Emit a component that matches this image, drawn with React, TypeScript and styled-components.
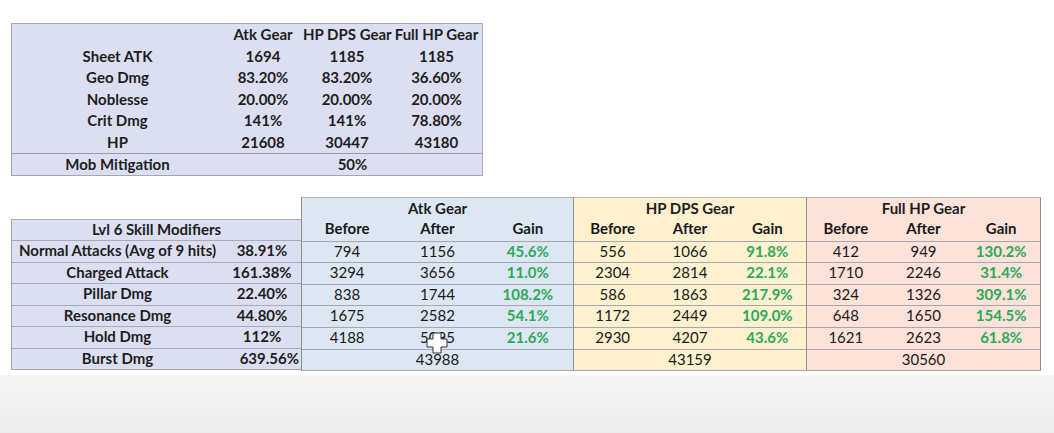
import React from "react";
import styled, { createGlobalStyle } from "styled-components";

const Global = createGlobalStyle`
  html, body { margin: 0; padding: 0; background: #ffffff; }
  body { font-family: Lato, "Liberation Sans", sans-serif; color: #1e1e1e; }
`;

const Page = styled.div`
  position: relative;
  width: 1054px;
  height: 433px;
  overflow: hidden;
  display: flex;
  flex-direction: column;
  background: #ffffff;
`;

const Sheet = styled.div`
  padding: 23px 0 0 11px;
  display: flex;
  flex-direction: column;
  gap: 21px;
`;

const Footer = styled.div`
  flex: 1;
  margin-top: 4px;
  background: linear-gradient(180deg, #f6f6f6 0%, #ebebeb 100%);
`;

const TopTable = styled.div`
  width: 472px;
  box-sizing: border-box;
  display: grid;
  grid-template-columns: 211px 80px 88px 91px;
  grid-auto-rows: 21.5px;
  background: #dcdff1;
  border: 1px solid #a4a6b4;
  font-size: 15px;
  font-weight: 700;
`;

const TCell = styled.div<{ $span?: number; $sep?: boolean }>`
  grid-column: span ${(p) => p.$span ?? 1};
  text-align: center;
  line-height: 21px;
  white-space: nowrap;
  border-top: ${(p) => (p.$sep ? "1px solid #9a9cab" : "none")};
  box-sizing: border-box;
`;

const Bottom = styled.div`
  display: flex;
  align-items: flex-start;
`;

const LabelBlock = styled.div`
  margin-top: 22px;
  width: 290px;
  box-sizing: border-box;
  background: #dcdff1;
  border-left: 1px solid #a4a6b4;
  border-bottom: 1px solid #a4a6b4;
  font-size: 15px;
  font-weight: 700;
`;

const LRow = styled.div`
  display: grid;
  grid-template-columns: 211px 78px;
  height: 21.57px;
  line-height: 19px;
  border-top: 1px solid #a8aab8;
  box-sizing: border-box;
`;

const LTitle = styled.div`
  height: 21.57px;
  line-height: 19px;
  text-align: center;
  border-top: 1px solid #a8aab8;
  box-sizing: border-box;
`;

const LText = styled.div<{ $right?: boolean }>`
  text-align: ${(p) => (p.$right ? "right" : "center")};
  white-space: nowrap;
  padding-right: ${(p) => (p.$right ? "2px" : "0")};
`;

const Section = styled.div<{ $bg: string; $w: number; $first?: boolean }>`
  width: ${(p) => p.$w}px;
  box-sizing: border-box;
  background: ${(p) => p.$bg};
  border-top: 1px solid #b3b3b3;
  border-bottom: 1px solid #a8a8a8;
  border-right: 1px solid #8f8f8f;
  border-left: ${(p) => (p.$first ? "1px solid #8f8f8f" : "none")};
  font-size: 15px;
`;

const SRow = styled.div<{ $lined?: boolean }>`
  display: grid;
  grid-template-columns: repeat(3, 1fr);
  height: 21.6px;
  line-height: 19px;
  box-sizing: border-box;
  border-top: ${(p) => (p.$lined ? "1px solid #a6a8ad" : "none")};
`;

const STitle = styled.div`
  height: 21.6px;
  line-height: 20px;
  text-align: center;
  font-weight: 700;
`;

const SCell = styled.div<{ $kind?: "head" | "gain" | "num" }>`
  text-align: center;
  white-space: nowrap;
  font-weight: ${(p) => (p.$kind === "num" || !p.$kind ? 400 : 700)};
  color: ${(p) => (p.$kind === "gain" ? "#2ea85a" : "#1a1a1a")};
`;

const Cursor = styled.svg`
  position: absolute;
  left: 425px;
  top: 331px;
  width: 24px;
  height: 24px;
`;

const topRows: [string, string, string, string][] = [
  ["Sheet ATK", "1694", "1185", "1185"],
  ["Geo Dmg", "83.20%", "83.20%", "36.60%"],
  ["Noblesse", "20.00%", "20.00%", "20.00%"],
  ["Crit Dmg", "141%", "141%", "78.80%"],
  ["HP", "21608", "30447", "43180"],
];

const labels: [string, string][] = [
  ["Normal Attacks (Avg of 9 hits)", "38.91%"],
  ["Charged Attack", "161.38%"],
  ["Pillar Dmg", "22.40%"],
  ["Resonance Dmg", "44.80%"],
  ["Hold Dmg", "112%"],
];

type Sec = {
  title: string;
  bg: string;
  w: number;
  rows: [string, string, string][];
  burst: string;
};

const sections: Sec[] = [
  {
    title: "Atk Gear",
    bg: "#dce7f3",
    w: 273,
    rows: [
      ["794", "1156", "45.6%"],
      ["3294", "3656", "11.0%"],
      ["838", "1744", "108.2%"],
      ["1675", "2582", "54.1%"],
      ["4188", "5095", "21.6%"],
    ],
    burst: "43988",
  },
  {
    title: "HP DPS Gear",
    bg: "#fdf1d0",
    w: 233,
    rows: [
      ["556", "1066", "91.8%"],
      ["2304", "2814", "22.1%"],
      ["586", "1863", "217.9%"],
      ["1172", "2449", "109.0%"],
      ["2930", "4207", "43.6%"],
    ],
    burst: "43159",
  },
  {
    title: "Full HP Gear",
    bg: "#fce2d8",
    w: 234,
    rows: [
      ["412", "949", "130.2%"],
      ["1710", "2246", "31.4%"],
      ["324", "1326", "309.1%"],
      ["648", "1650", "154.5%"],
      ["1621", "2623", "61.8%"],
    ],
    burst: "30560",
  },
];

export default function App() {
  return (
    <Page>
      <Global />
      <Sheet>
        <TopTable>
          <TCell />
          <TCell>Atk Gear</TCell>
          <TCell>HP DPS Gear</TCell>
          <TCell>Full HP Gear</TCell>
          {topRows.map((r) => (
            <React.Fragment key={r[0]}>
              {r.map((c, i) => (
                <TCell key={i}>{c}</TCell>
              ))}
            </React.Fragment>
          ))}
          <TCell $sep>Mob Mitigation</TCell>
          <TCell $sep $span={3}>
            50%
          </TCell>
        </TopTable>

        <Bottom>
          <LabelBlock>
            <LTitle>Lvl 6 Skill Modifiers</LTitle>
            {labels.map(([l, v]) => (
              <LRow key={l}>
                <LText>{l}</LText>
                <LText>{v}</LText>
              </LRow>
            ))}
            <LRow>
              <LText>Burst Dmg</LText>
              <LText $right>639.56%</LText>
            </LRow>
          </LabelBlock>

          {sections.map((s, idx) => (
            <Section key={s.title} $bg={s.bg} $w={s.w} $first={idx === 0}>
              <STitle>{s.title}</STitle>
              <SRow>
                <SCell $kind="head">Before</SCell>
                <SCell $kind="head">After</SCell>
                <SCell $kind="head">Gain</SCell>
              </SRow>
              {s.rows.map((r, i) => (
                <SRow key={i} $lined>
                  <SCell $kind="num">{r[0]}</SCell>
                  <SCell $kind="num">{r[1]}</SCell>
                  <SCell $kind="gain">{r[2]}</SCell>
                </SRow>
              ))}
              <SRow $lined>
                <SCell />
                <SCell $kind="num">{s.burst}</SCell>
                <SCell />
              </SRow>
            </Section>
          ))}
        </Bottom>
      </Sheet>
      <Footer />
      <Cursor viewBox="0 0 24 24">
        <path
          d="M8 2h8v6h6v8h-6v6H8v-6H2V8h6z"
          fill="#ffffff"
          stroke="#333"
          strokeWidth="1"
          strokeLinejoin="miter"
        />
      </Cursor>
    </Page>
  );
}
